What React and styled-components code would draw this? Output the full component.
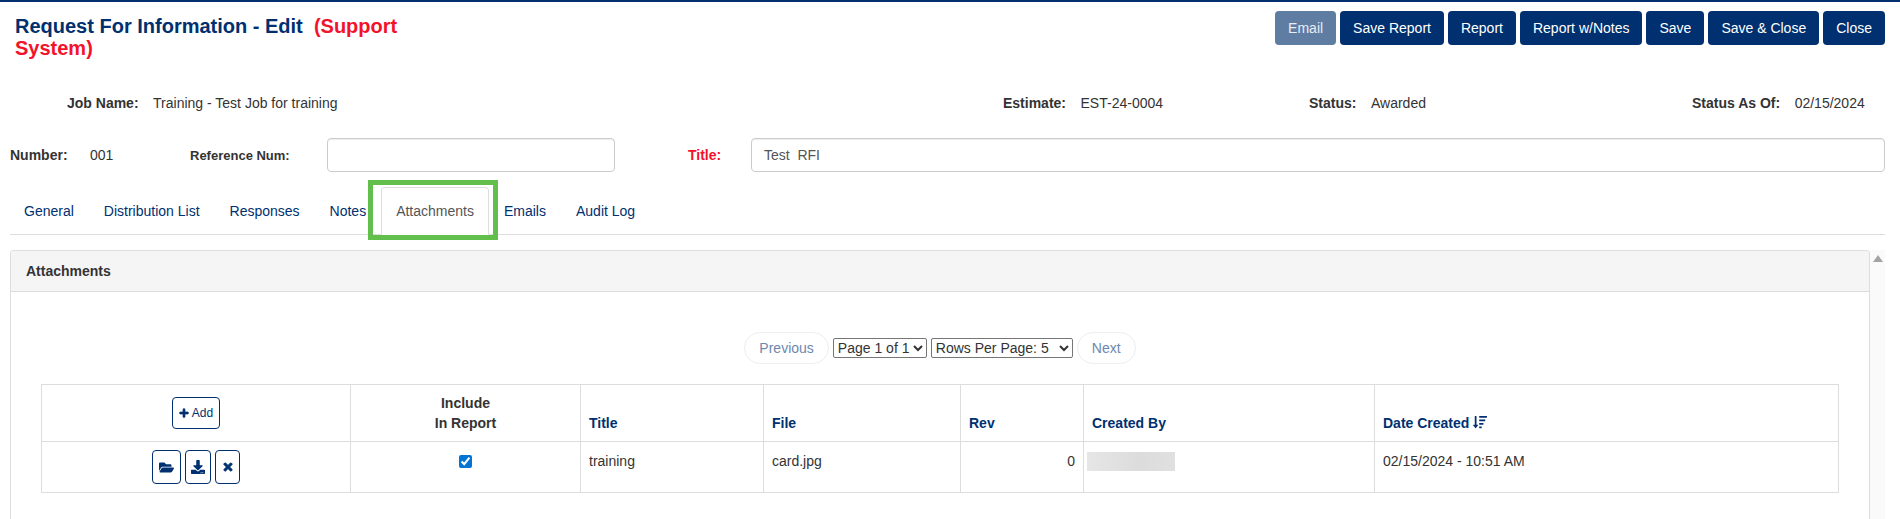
import React from "react";
import styled, { createGlobalStyle } from "styled-components";
import { FaFolderOpen, FaDownload, FaTimes, FaPlus, FaSortAmountDown } from "react-icons/fa";

const Global = createGlobalStyle`
  html, body { margin: 0; padding: 0; background: #fff; height: 519px; overflow: hidden; }
  body { font-family: "Liberation Sans", Arial, sans-serif; font-size: 14px; color: #333; }
  * { box-sizing: border-box; }
`;

const navy = "#00306f";

const Page = styled.div`
  width: 1900px;
  height: 519px;
  border-top: 2px solid ${navy};
  overflow: hidden;
`;
const Header = styled.div`
  display: flex;
  justify-content: space-between;
  align-items: flex-start;
  height: 68px;
  padding: 9px 15px 0 15px;
`;
const Title = styled.h1`
  margin: 4px 0 0;
  width: 400px;
  font-size: 20px;
  line-height: 22px;
  font-weight: 700;
  color: ${navy};
`;
const Red = styled.span`
  color: #f4122a;
`;
const Toolbar = styled.div`
  display: flex;
  gap: 4px;
`;
const ActionButton = styled.button`
  height: 34px;
  padding: 0 13px;
  border: 0;
  border-radius: 4px;
  background: ${(p) => (p.$muted ? "#5f7ca3" : navy)};
  color: ${(p) => (p.$muted ? "#e8edf3" : "#fff")};
  font: 400 14px "Liberation Sans", sans-serif;
`;
const InfoRow = styled.div`
  display: grid;
  grid-template-columns: 936px 306px 383px 1fr;
  height: 52px;
  margin-top: 16px;
  padding-left: 67px;
  align-items: start;
`;
const Info = styled.div`
  display: flex;
  gap: 14.5px;
  line-height: 34px;
`;
const Label = styled.b`
  font-weight: 700;
  color: #333;
`;
const FormRow = styled.div`
  display: flex;
  align-items: center;
  height: 34px;
  padding: 0 15px 0 10px;
`;
const NumberLabel = styled(Label)`
  width: 80px;
`;
const NumberValue = styled.span`
  width: 100px;
`;
const RefLabel = styled(Label)`
  width: 137px;
  font-size: 13px;
`;
const TextInput = styled.input`
  height: 34px;
  padding: 0 12px;
  border: 1px solid #ccc;
  border-radius: 4px;
  font: 400 14px "Liberation Sans", sans-serif;
  color: #555;
  width: ${(p) => (p.$grow ? "auto" : `${p.$w}px`)};
  flex: ${(p) => (p.$grow ? "1 1 0" : "0 0 auto")};
  min-width: 0;
  box-shadow: inset 0 1px 1px rgba(0, 0, 0, 0.075);
`;
const TitleLabel = styled(Label)`
  color: #f4122a;
  margin-left: 73px;
  width: 63px;
`;
const Tabs = styled.div`
  display: flex;
  align-items: flex-end;
  height: 63px;
  margin: 0 15px 0 10px;
  border-bottom: 1px solid #ddd;
  & > :first-child {
    margin-left: -1px;
  }
`;
const Tab = styled.div`
  height: 48px;
  margin-bottom: -1px;
  padding: 0 14px;
  line-height: 46px;
  color: ${(p) => (p.$active ? "#555" : navy)};
  position: relative;
  border: 1px solid ${(p) => (p.$active ? "#ddd" : "transparent")};
  border-bottom-color: ${(p) => (p.$active ? "#fff" : "transparent")};
  border-radius: 4px 4px 0 0;
  background: ${(p) => (p.$active ? "#fff" : "transparent")};
`;
const Highlight = styled.div`
  position: absolute;
  left: -14px;
  right: -10px;
  top: -8px;
  bottom: -6px;
  border: 5px solid #63bf4b;
  pointer-events: none;
`;
const ContentRow = styled.div`
  display: flex;
  margin: 15px 15px 0 10px;
`;
const Panel = styled.div`
  width: 1860px;
  height: 269px;
  border: 1px solid #ddd;
  border-bottom: 0;
  border-radius: 4px 4px 0 0;
`;
const PanelHeading = styled.div`
  height: 41px;
  padding-left: 15px;
  background: #f5f5f5;
  border-bottom: 1px solid #ddd;
  border-radius: 3px 3px 0 0;
  line-height: 40px;
  font-weight: 700;
  color: #333;
`;
const PanelBody = styled.div`
  padding: 40px 30px 0 30px;
`;
const Pager = styled.div`
  display: flex;
  justify-content: center;
  align-items: center;
  gap: 4px;
  height: 32px;
  margin-bottom: 20px;
`;
const PagerButton = styled.div`
  height: 32px;
  line-height: 30px;
  padding: 0 14px;
  border: 1px solid #eee;
  border-radius: 16px;
  color: #6e88ad;
  font-size: 14px;
`;
const PagerSelect = styled.select`
  height: 20px;
  font: 400 14px "Liberation Sans", sans-serif;
  color: #333;
  background: #fff;
  border: 1px solid #767676;
  border-radius: 2px;
  padding: 0;
  width: ${(p) => p.$w}px;
`;
const Table = styled.table`
  width: 1798px;
  border-collapse: collapse;
  table-layout: fixed;
`;
const Th = styled.th`
  height: 57px;
  padding: 0 8px 8px;
  border: 1px solid #ddd;
  vertical-align: bottom;
  text-align: ${(p) => (p.$center ? "center" : "left")};
  color: ${(p) => (p.$center ? "#333" : navy)};
  font-weight: 700;
  line-height: 20px;
`;
const AddTh = styled(Th)`
  vertical-align: middle;
  text-align: center;
  padding: 0;
`;
const Td = styled.td`
  height: 51px;
  padding: 9px 8px 0;
  border: 1px solid #ddd;
  vertical-align: top;
  line-height: 20px;
  text-align: ${(p) => p.$align || "left"};
`;
const ActionsTd = styled(Td)`
  padding: 8px 0 0;
  text-align: center;
`;
const ActionGroup = styled.div`
  display: flex;
  justify-content: center;
  gap: 4px;
`;
const AddButton = styled.button`
  display: inline-flex;
  align-items: center;
  justify-content: center;
  gap: 3px;
  width: 48px;
  height: 32px;
  padding: 0;
  border: 1px solid ${navy};
  border-radius: 4px;
  background: #fff;
  color: ${navy};
  font: 400 12px "Liberation Sans", sans-serif;
`;
const IconButton = styled(AddButton)`
  width: ${(p) => p.$w}px;
  height: 34px;
`;
const Redacted = styled.div`
  width: 88px;
  height: 19px;
  margin: 1px 0 0 -5px;
  background: linear-gradient(90deg, #e6e6e6, #dcdcdc 60%, #e0e0e0);
`;
const Checkbox = styled.input`
  width: 13px;
  height: 13px;
  margin: 4px 0 0;
  accent-color: #0075d5;
`;
const SortIcon = styled(FaSortAmountDown)`
  font-size: 14px;
  margin-left: 4px;
  vertical-align: -1px;
`;
const Scrollbar = styled.div`
  flex: 0 0 15px;
  height: 269px;
  background: #fafafa;
  padding: 5px 0 0 3px;
`;
const ScrollArrow = styled.div`
  width: 0;
  height: 0;
  border-left: 5px solid transparent;
  border-right: 5px solid transparent;
  border-bottom: 7px solid #a3a3a3;
`;

export default function App() {
  return (
    <Page>
      <Global />
      <Header>
        <Title>
          Request For Information - Edit&nbsp; <Red>(Support System)</Red>
        </Title>
        <Toolbar>
          <ActionButton $muted>Email</ActionButton>
          <ActionButton>Save Report</ActionButton>
          <ActionButton>Report</ActionButton>
          <ActionButton>Report w/Notes</ActionButton>
          <ActionButton>Save</ActionButton>
          <ActionButton>Save &amp; Close</ActionButton>
          <ActionButton>Close</ActionButton>
        </Toolbar>
      </Header>
      <InfoRow>
        <Info>
          <Label>Job Name:</Label>
          <span>Training - Test Job for training</span>
        </Info>
        <Info>
          <Label>Estimate:</Label>
          <span>EST-24-0004</span>
        </Info>
        <Info>
          <Label>Status:</Label>
          <span>Awarded</span>
        </Info>
        <Info>
          <Label>Status As Of:</Label>
          <span>02/15/2024</span>
        </Info>
      </InfoRow>
      <FormRow>
        <NumberLabel>Number:</NumberLabel>
        <NumberValue>001</NumberValue>
        <RefLabel>Reference Num:</RefLabel>
        <TextInput $w={288} />
        <TitleLabel>Title:</TitleLabel>
        <TextInput $grow defaultValue="Test  RFI" />
      </FormRow>
      <Tabs>
        <Tab>General</Tab>
        <Tab>Distribution List</Tab>
        <Tab>Responses</Tab>
        <Tab>Notes</Tab>
        <Tab $active>
          Attachments
          <Highlight />
        </Tab>
        <Tab>Emails</Tab>
        <Tab>Audit Log</Tab>
      </Tabs>
      <ContentRow>
        <Panel>
          <PanelHeading>Attachments</PanelHeading>
          <PanelBody>
            <Pager>
              <PagerButton>Previous</PagerButton>
              <PagerSelect $w={94}>
                <option>Page 1 of 1</option>
              </PagerSelect>
              <PagerSelect $w={142}>
                <option>Rows Per Page: 5</option>
              </PagerSelect>
              <PagerButton>Next</PagerButton>
            </Pager>
            <Table>
              <colgroup>
                <col style={{ width: 309 }} />
                <col style={{ width: 230 }} />
                <col style={{ width: 183 }} />
                <col style={{ width: 197 }} />
                <col style={{ width: 123 }} />
                <col style={{ width: 291 }} />
                <col />
              </colgroup>
              <thead>
                <tr>
                  <AddTh>
                    <AddButton>
                      <FaPlus size={10} stroke="currentColor" strokeWidth={40} /> Add
                    </AddButton>
                  </AddTh>
                  <Th $center>
                    Include
                    <br />
                    In Report
                  </Th>
                  <Th>Title</Th>
                  <Th>File</Th>
                  <Th>Rev</Th>
                  <Th>Created By</Th>
                  <Th>
                    Date Created
                    <SortIcon />
                  </Th>
                </tr>
              </thead>
              <tbody>
                <tr>
                  <ActionsTd>
                    <ActionGroup>
                      <IconButton $w={29}><FaFolderOpen size={15} /></IconButton>
                      <IconButton $w={26}><FaDownload size={14} /></IconButton>
                      <IconButton $w={25}><FaTimes size={12} stroke="currentColor" strokeWidth={40} /></IconButton>
                    </ActionGroup>
                  </ActionsTd>
                  <Td $align="center">
                    <Checkbox type="checkbox" defaultChecked />
                  </Td>
                  <Td>training</Td>
                  <Td>card.jpg</Td>
                  <Td $align="right">0</Td>
                  <Td><Redacted /></Td>
                  <Td>02/15/2024 - 10:51 AM</Td>
                </tr>
              </tbody>
            </Table>
          </PanelBody>
        </Panel>
        <Scrollbar>
          <ScrollArrow />
        </Scrollbar>
      </ContentRow>
    </Page>
  );
}
